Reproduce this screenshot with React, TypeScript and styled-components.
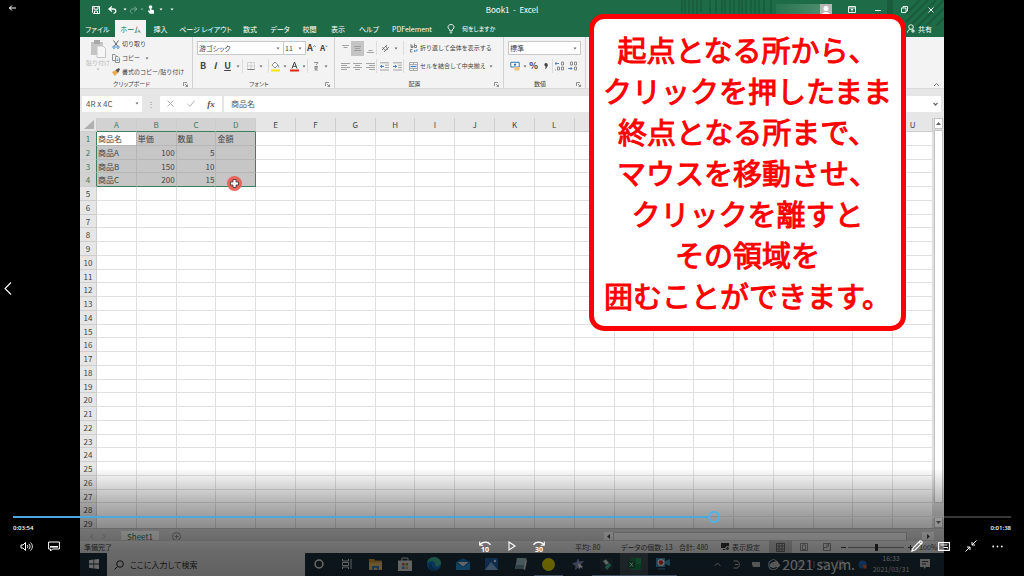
import React, { useState } from "react";
import styled, { createGlobalStyle, css } from "styled-components";

const GlobalStyle = createGlobalStyle`
  * { box-sizing: border-box; }
  body { margin: 0; background: #000; font-family: "Noto Sans CJK JP", "Noto Sans", sans-serif; }
  button, input, select { font: inherit; color: inherit; background: none; border: 0; padding: 0; margin: 0; border-radius: 0; }
  button { cursor: pointer; }
  svg { display: block; flex: none; }
`;

const GREEN = "#1e6c47";

/* ---------- player shell ---------- */

const Player = styled.main`
  position: relative;
  display: grid;
  grid-template-columns: 80px minmax(0, 1fr) 80px;
  grid-template-rows: minmax(0, 1fr);
  height: 100vh;
  overflow: hidden;
  background: #000;
`;

const Gutter = styled.nav`
  display: grid;
  grid-template-rows: 16px 1fr 16px;
  align-items: center;
  justify-items: start;
  padding-left: 3px;
  color: #fff;
`;

const Video = styled.section`
  position: relative;
  display: flex;
  flex-direction: column;
  min-width: 0;
  background: #e6e6e6;
  color: #444;
  font-size: 7px;
  line-height: 10px;
  font-feature-settings: "palt";
`;

const Callout = styled.p`
  position: absolute;
  top: 14px;
  right: 38px;
  margin: 0;
  width: 317px;
  padding: 10px 0;
  border: 5px solid #fe0000;
  border-radius: 15px;
  background: #fff;
  color: #fe0000;
  font-size: 29px;
  line-height: 41px;
  font-weight: 400;
  -webkit-text-stroke: 1px #fe0000;
  text-align: center;
  white-space: nowrap;
  font-feature-settings: normal;
`;

const CalloutLine = styled.span`
  display: block;
`;

/* ---------- title bar and tabs ---------- */

const Header = styled.header`
  position: relative;
  background: ${GREEN};
  color: #fff;
`;

const Stripes = styled.svg`
  position: absolute;
  right: 0;
  top: 0;
`;

const TitleBar = styled.div`
  position: relative;
  display: grid;
  grid-template-columns: 1fr auto 1fr;
  align-items: center;
  height: 19px;
  font-size: 8px;
`;

const QuickAccess = styled.div`
  display: flex;
  align-items: center;
  padding-left: 10px;
`;

const WindowButtons = styled.div`
  display: flex;
  align-items: center;
  justify-content: flex-end;
`;

const Account = styled.span`
  width: 44px;
  height: 11px;
  background: linear-gradient(90deg, #2a7450, #4b8b6b);
`;

const Cell = styled.button<{ $w: number; $dim?: boolean; $on?: boolean }>`
  display: flex;
  align-items: center;
  justify-content: center;
  flex: none;
  width: ${(p) => p.$w}px;
  height: 15px;
  opacity: ${(p) => (p.$dim ? 0.4 : 1)};
  background: ${(p) => (p.$on ? "#c5c5c5" : "none")};
`;

const Tabs = styled.div`
  position: relative;
  display: flex;
  align-items: flex-end;
  height: 18px;
`;

const Tab = styled.button<{ $w: number; $active?: boolean }>`
  flex: none;
  width: ${(p) => p.$w}px;
  height: 17px;
  white-space: nowrap;
  ${(p) => p.$active && css`background: #f3f3f3; color: ${GREEN};`}
`;

const TellMe = styled.button`
  display: flex;
  align-items: center;
  gap: 7px;
  height: 17px;
  padding-left: 8px;
  font-size: 6px;
`;

const Share = styled.button`
  display: flex;
  align-items: center;
  gap: 3px;
  height: 17px;
  margin-left: auto;
  padding-right: 12px;
`;

/* ---------- ribbon ---------- */

const Ribbon = styled.div`
  display: flex;
  height: 52px;
  background: #f3f3f3;
  border-bottom: 1px solid #dcdcdc;
`;

const Group = styled.section<{ $w: number }>`
  display: grid;
  grid-template-rows: 42px 9px;
  flex: none;
  width: ${(p) => p.$w}px;
  border-right: 1px solid #d2d2d2;
`;

const GroupFooter = styled.footer`
  display: grid;
  grid-template-columns: 1fr 9px;
  align-items: center;
  text-align: center;
  font-size: 6px;
`;

const ClipboardBody = styled.div`
  display: grid;
  grid-template-columns: 32px 1fr;
`;

const PasteButton = styled.button`
  display: flex;
  flex-direction: column;
  align-items: center;
  padding: 3px 0 0 4px;
  color: #b8b8b8;
  font-size: 6px;
  font-feature-settings: normal;
  white-space: nowrap;
`;

const CommandList = styled.div`
  display: grid;
  grid-template-rows: repeat(3, 14px);
`;

const Command = styled.button`
  display: flex;
  align-items: center;
  gap: 2px;
  font-size: 6px;
  font-feature-settings: normal;
  white-space: nowrap;
`;

const TwoRows = styled.div`
  display: grid;
  grid-template-rows: 16px 16px;
  gap: 2px;
  padding: 3px 0 0 4px;
`;

const ToolRow = styled.div`
  display: flex;
  align-items: center;
`;

const Divider = styled.span`
  flex: none;
  width: 1px;
  height: 14px;
  background: #dcdcdc;
`;

const Spacer = styled.span`
  flex: none;
  width: 5px;
`;

const SelectBox = styled.label<{ $w: number }>`
  display: flex;
  align-items: center;
  width: ${(p) => p.$w}px;
  height: 14px;
  margin-right: -1px;
  padding: 0 3px 0 1px;
  border: 1px solid #c8c8c8;
  background: #fff;
`;

const Select = styled.select`
  flex: 1;
  min-width: 0;
  appearance: none;
  outline: none;
`;

const FontGlyph = styled.span<{ $italic?: boolean; $line?: boolean; $serif?: boolean; $size?: number }>`
  font-family: ${(p) => (p.$serif ? '"Liberation Serif", serif' : "inherit")};
  font-size: ${(p) => p.$size ?? 9}px;
  font-weight: 700;
  font-style: ${(p) => (p.$italic ? "italic" : "normal")};
  text-decoration: ${(p) => (p.$line ? "underline" : "none")};
`;

const Collapse = styled.button`
  align-self: flex-end;
  margin-left: auto;
  padding: 0 4px 1px 0;
`;

/* ---------- formula bar ---------- */

const FormulaBar = styled.div`
  display: flex;
  align-items: center;
  height: 29px;
  padding: 0 3px 0 2px;
  font-size: 8px;
  font-feature-settings: normal;
  color: #555;
`;

const NameBox = styled.label`
  display: flex;
  align-items: center;
  width: 60px;
  height: 16px;
  padding: 0 3px 0 4px;
  background: #fff;
`;

const BarInput = styled.input`
  flex: 1;
  min-width: 0;
  width: 100%;
  outline: none;
`;

const Grip = styled.span`
  width: 18px;
  text-align: center;
  color: #888;
`;

const FormulaButtons = styled.div`
  display: flex;
  align-items: center;
  width: 62px;
  height: 16px;
  background: #fff;
`;

const FormulaBox = styled.label`
  display: flex;
  align-items: center;
  flex: 1;
  height: 16px;
  margin-left: 2px;
  padding: 0 3px 0 7px;
  background: #fff;
`;

/* ---------- sheet ---------- */

const SheetArea = styled.div`
  position: relative;
  display: grid;
  grid-template-columns: minmax(0, 1fr) 11px;
  grid-template-rows: minmax(0, 1fr);
  flex: 1;
  min-height: 0;
  overflow: hidden;
`;

const Sheet = styled.table`
  display: grid;
  grid-template-columns: 17px repeat(21, minmax(0, 1fr));
  grid-template-rows: 14px repeat(29, minmax(0, 1fr));
  height: 413px;
  font-size: 8px;
  line-height: 13px;
  color: #444;
  font-feature-settings: normal;
`;

const SheetPart = styled.tbody`
  display: contents;
`;
const SheetRow = styled.tr`
  display: contents;
`;

const HeadCell = styled.th<{ $on?: boolean; $side?: boolean }>`
  padding: 0;
  font-weight: 400;
  text-align: center;
  overflow: hidden;
  background: ${(p) => (p.$on ? "#d2d2d2" : "#e6e6e6")};
  color: ${(p) => (p.$on ? "#3c7a5c" : "#444")};
  border-right: 1px solid ${(p) => (p.$side && p.$on ? "#3c8060" : "#cdcdcd")};
  border-bottom: 1px solid ${(p) => (!p.$side && p.$on ? "#3c8060" : "#cdcdcd")};
`;

const Corner = styled.td`
  display: flex;
  align-items: flex-end;
  justify-content: flex-end;
  padding: 0 2px 2px 0;
  border-right: 1px solid #cdcdcd;
  border-bottom: 1px solid #cdcdcd;
`;

const DataCell = styled.td<{ $fill: string; $right: string; $bottom: string; $num: boolean }>`
  padding: 0 1px;
  overflow: hidden;
  white-space: nowrap;
  background: ${(p) => p.$fill};
  border-right: 1px solid ${(p) => p.$right};
  border-bottom: 1px solid ${(p) => p.$bottom};
  text-align: ${(p) => (p.$num ? "right" : "left")};
`;

const Pointer = styled.svg`
  position: absolute;
  left: 147px;
  top: 58px;
`;

const VScroll = styled.div`
  display: grid;
  grid-template-rows: 11px 1fr 11px;
  gap: 1px;
  justify-items: center;
  background: #dedede;
`;

const ScrollPiece = styled.button<{ $short?: boolean }>`
  display: flex;
  align-items: center;
  justify-content: center;
  width: 9px;
  background: #fff;
  border: 1px solid #c4c4c4;
  margin-bottom: ${(p) => (p.$short ? 13 : 0)}px;
`;

const SheetBar = styled.div`
  display: grid;
  grid-template-columns: 1fr 340px;
  flex: none;
  height: 12px;
  background: #d6d6d6;
  border-top: 1px solid #c0c0c0;
`;

const SheetTabs = styled.div`
  display: flex;
  align-items: center;
  padding-left: 6px;
`;

const SheetTab = styled.button`
  width: 38px;
  height: 11px;
  margin: 0 12px 0 6px;
  background: #f6f6f6;
  border-bottom: 1px solid ${GREEN};
  color: ${GREEN};
  font-size: 8px;
  line-height: 9px;
`;

const HScroll = styled.div`
  display: grid;
  grid-template-columns: 9px 1fr 15px 12px 10px;
  align-items: center;
`;

const HThumb = styled.span`
  height: 10px;
  background: #f4f4f4;
  border: 1px solid #bdbdbd;
`;

const HArrow = styled.button`
  display: flex;
  align-items: center;
  justify-content: center;
  height: 10px;
  background: #f4f4f4;
`;

const StatusBar = styled.footer`
  display: flex;
  align-items: center;
  flex: none;
  height: 13px;
  padding-left: 4px;
  background: #ececec;
  border-top: 1px solid #cfcfcf;
`;

const Stat = styled.span<{ $w: number; $push?: boolean }>`
  display: flex;
  align-items: center;
  gap: 2px;
  flex: none;
  width: ${(p) => p.$w}px;
  margin-left: ${(p) => (p.$push ? "auto" : "0")};
  white-space: nowrap;
`;

const Zoom = styled.input`
  appearance: none;
  width: 56px;
  height: 10px;
  &::-webkit-slider-runnable-track { height: 1px; background: #888; }
  &::-webkit-slider-thumb { appearance: none; width: 3px; height: 7px; margin-top: -3px; background: #333; }
`;

/* ---------- taskbar ---------- */

const Taskbar = styled.div`
  position: relative;
  display: flex;
  flex: none;
  height: 23px;
  background: #1d323f;
  color: #fff;
`;

const Search = styled.label`
  display: flex;
  align-items: center;
  gap: 6px;
  width: 198px;
  padding-left: 7px;
  background: #f2f2f2;
  color: #222;
  font-size: 8px;
`;

const SearchInput = styled.input`
  flex: 1;
  min-width: 0;
  outline: none;
  &::placeholder { color: #333; opacity: 1; }
`;

const TaskButton = styled.button<{ $w: number; $open?: boolean; $active?: boolean }>`
  display: flex;
  align-items: center;
  justify-content: center;
  flex: none;
  width: ${(p) => p.$w}px;
  background: ${(p) => (p.$active ? "#46565f" : "none")};
  border-bottom: 1px solid ${(p) => (p.$open ? "#9cc4ee" : "transparent")};
`;

const Tray = styled.div`
  display: flex;
  margin-left: auto;
  padding-right: 8px;
`;

const Clock = styled.time`
  display: grid;
  grid-template-rows: 11px 11px;
  width: 46px;
  text-align: center;
  color: #d8d8d8;
`;

const Watermark = styled.span`
  position: absolute;
  right: 89px;
  top: 1px;
  font-size: 14px;
  line-height: 20px;
  white-space: nowrap;
  color: #f0f0f0;
  font-feature-settings: normal;
`;

/* ---------- playback controls ---------- */

const Controls = styled.div`
  position: absolute;
  left: 0;
  right: 0;
  bottom: 0;
  display: flex;
  flex-direction: column;
  justify-content: flex-end;
  height: 108px;
  padding: 0 13px 18px;
  background: linear-gradient(
    rgba(0, 0, 0, 0),
    rgba(0, 0, 0, 0.28) 30%,
    rgba(0, 0, 0, 0.44) 53%,
    rgba(0, 0, 0, 0.57) 80%,
    rgba(0, 0, 0, 0.6)
  );
  color: #fff;
`;

const Seek = styled.input`
  appearance: none;
  width: 100%;
  height: 12px;
  outline: none;
  &::-webkit-slider-runnable-track {
    height: 2px;
    background: linear-gradient(90deg, #4aa8dd 0 69.8%, transparent 69.8% 70.9%, rgba(160, 160, 160, 0.35) 70.9%);
  }
  &::-webkit-slider-thumb {
    appearance: none;
    width: 12px;
    height: 12px;
    margin-top: -5px;
    border: 2px solid #4fb3ea;
    border-radius: 50%;
  }
`;

const Times = styled.div`
  display: flex;
  justify-content: space-between;
  font-family: "Open Sans", sans-serif;
  font-size: 6px;
  line-height: 11px;
  font-weight: 600;
`;

const ButtonRow = styled.div`
  display: grid;
  grid-template-columns: 1fr auto 1fr;
  height: 24px;
`;

const Cluster = styled.div<{ $end?: boolean }>`
  display: flex;
  justify-content: ${(p) => (p.$end ? "flex-end" : "flex-start")};
`;

const PlayerButton = styled.button`
  display: flex;
  align-items: center;
  justify-content: center;
  width: 27px;
  height: 24px;
  color: #fff;
`;

/* ---------- drawings ---------- */

type GlyphProps = { w?: number; h?: number; box?: string; sw?: number; color?: string; children: React.ReactNode };
const Glyph = ({ w = 10, h = w, box = `0 0 ${w} ${h}`, sw = 1, color = "currentColor", children }: GlyphProps) => (
  <svg width={w} height={h} viewBox={box} fill="none" stroke={color} strokeWidth={sw} aria-hidden="true">
    {children}
  </svg>
);

const Caret = ({ color = "#666" }: { color?: string }) => (
  <Glyph w={4} h={3} color="none"><path d="M0.5 0.5h3L2 2.5z" fill={color} /></Glyph>
);

const Launcher = () => (
  <Glyph w={5} sw={0.8} color="#777"><path d="M0.5 4V0.5H4M2 2l2.5 2.5M4.5 2.5v2h-2" /></Glyph>
);

const Lines = ({ d }: { d: string }) => (
  <Glyph w={9} sw={0.9} color="#9a9a9a"><path d={d} /></Glyph>
);

const Skip = ({ n, flip }: { n: number; flip?: boolean }) => (
  <svg width="14" height="14" viewBox="0 0 14 14" fill="none" stroke="currentColor" strokeWidth="1.1" aria-hidden="true">
    <path d={flip ? "M1.5 6C3.5 2.3 9.5 2 12 6M12.3 2.5V6.2H8.8" : "M12.5 6C10.5 2.3 4.5 2 2 6M1.7 2.5V6.2H5.2"} />
    <text x="7" y="13" textAnchor="middle" fontSize="7" fontWeight="700" fontFamily="Open Sans" fill="currentColor" stroke="none">{n}</text>
  </svg>
);

/* ---------- data ---------- */

const TABS: [string, number][] = [
  ["ファイル", 35], ["ホーム", 31], ["挿入", 29], ["ページ レイアウト", 61], ["数式", 28],
  ["データ", 32], ["校閲", 27], ["表示", 30], ["ヘルプ", 32], ["PDFelement", 54],
];

const COLUMNS = ["A", "B", "C", "D", "E", "F", "G", "H", "I", "J", "K", "L", "", "", "", "", "", "", "", "", "U"];
const ROWS = Array.from({ length: 29 }, (_, i) => i + 1);
const DATA: string[][] = [
  ["商品名", "単価", "数量", "金額"],
  ["商品A", "100", "5", ""],
  ["商品B", "150", "10", ""],
  ["商品C", "200", "15", ""],
];

const MESSAGE = [
  "起点となる所から、", "クリックを押したまま", "終点となる所まで、", "マウスを移動させ、",
  "クリックを離すと", "その領域を", "囲むことができます。",
];

const LEFT = "M0 1.5H9M0 3.5H6M0 5.5H9M0 7.5H6";
const CENTER = "M0 1.5H9M2 3.5H7M0 5.5H9M2 7.5H7";
const RIGHT = "M0 1.5H9M3 3.5H9M0 5.5H9M3 7.5H9";

/* ---------- sections ---------- */

const ExcelHeader = () => (
  <Header>
    <Stripes width="264" height="37" viewBox="0 0 264 37" aria-hidden="true">
      <g stroke="#195b3c" strokeWidth="1.5">
        <path d="M2 0V15M5 0V15M9 0V15M13 0V15M17 0V15M21 0V12M30 0V15M36 0V15M42 0V15M45 0V15M50 0V15M54 0V15M59 0V15M62 0V15M66 0V15M71 0V15M75 0V15M79 0V15M84 0V15M91 0V15" />
        <path strokeWidth="6" d="M210 0V15" />
        <path strokeWidth="2" d="M226 14L240 0M226 22L248 0M228 28L256 0M236 28L264 0M246 26L264 8M256 26L264 18" />
      </g>
    </Stripes>
    <TitleBar>
      <QuickAccess>
        <Cell $w={12} aria-label="上書き保存">
          <Glyph w={8}><path d="M.5.5H7.5V7.5H1.5L.5 6.5ZM2 .5V3.2H6V.5M2.5 7.5V5H5.5V7.5" /></Glyph>
        </Cell>
        <Cell $w={20} aria-label="元に戻す">
          <Glyph w={9} h={8} sw={1.3}><path d="M3.8.6L1 3L3.8 5.5M1 3H5.5C8.5 3 8.500 7 5.5 7.3" /></Glyph>
        </Cell>
        <Cell $w={5} aria-label="元に戻す一覧"><Caret color="#fff" /></Cell>
        <Cell $w={12} $dim aria-label="やり直し">
          <Glyph w={9} h={8}><path d="M5.2.6L8 3L5.2 5.5M8 3H3.5C.5 3 .5 7 3.5 7.3" /></Glyph>
        </Cell>
        <Cell $w={5} $dim aria-label="やり直し一覧"><Caret color="#fff" /></Cell>
        <Cell $w={14} aria-label="タッチ/マウス モード">
          <Glyph w={8} h={9} color="none"><circle cx="3.5" cy="2" r="1.8" fill="#fff" /><path d="M2.8 2H4.3V4.5L7 5.2V8.8H2.8L.8 6L1.6 5.3L2.8 6Z" fill="#fff" /></Glyph>
        </Cell>
        <Cell $w={5} aria-label="モード一覧"><Caret color="#fff" /></Cell>
        <Cell $w={18} aria-label="ツール バーのカスタマイズ"><Caret color="#fff" /></Cell>
      </QuickAccess>
      <span>Book1&nbsp; -&nbsp; Excel</span>
      <WindowButtons>
        <Account />
        <Cell $w={12} aria-label="アカウント">
          <Glyph w={12} color="none"><path d="M0 0H12V12H0Z" fill="#b5b8b6" /><circle cx="6" cy="4.5" r="2.5" fill="#fff" /><path d="M1.5 12C1.5 6.5 10.5 6.5 10.5 12Z" fill="#fff" /></Glyph>
        </Cell>
        <Cell $w={39} aria-label="リボンの表示オプション">
          <Glyph w={8} h={7} sw={0.9}><path d="M.5.5H7.5V6.5H.5ZM.5 2H7.5M4 5.5V3M2.8 4L4 3L5.2 4" /></Glyph>
        </Cell>
        <Cell $w={14} aria-label="最小化"><Glyph w={6}><path d="M0 3.5H6" /></Glyph></Cell>
        <Cell $w={38} aria-label="元に戻す (縮小)"><Glyph w={7} sw={0.9}><path d="M.5 2H5V6.5H.5ZM2 2V.5H6.5V5H5" /></Glyph></Cell>
        <Cell $w={16} aria-label="閉じる"><Glyph w={6} sw={0.9}><path d="M.5.5L5.5 5.5M5.5.5L.5 5.5" /></Glyph></Cell>
        <Spacer />
      </WindowButtons>
    </TitleBar>
    <Tabs>
      {TABS.map(([label, w]) => (
        <Tab key={label} $w={w} $active={label === "ホーム"}>{label}</Tab>
      ))}
      <TellMe>
        <Glyph w={8} h={10} sw={0.9}><path d="M2.8 7V5.8C-.5 3.5 1.3.5 4 .5S8.5 3.5 5.2 5.8V7ZM2.8 8.8H5.2" /></Glyph>
        何をしますか
      </TellMe>
      <Share>
        <Glyph w={8} h={9} sw={0.9}><circle cx="4" cy="3" r="2.3" /><path d="M.5 8.5C.5 6.5 2 5.5 3.5 5.4M5 5.4L6 6.5M6 5V9M4 7H8" /></Glyph>
        共有
      </Share>
    </Tabs>
  </Header>
);

const ClipboardGroup = () => (
  <Group $w={113}>
    <ClipboardBody>
      <PasteButton>
        <Glyph w={16} h={18} color="none">
          <path d="M1 2H13V15H1Z" fill="#c4c4c4" /><path d="M4 0H10V4H4Z" fill="#a9a9a9" /><path d="M7 6H13L15.5 8.5V17.5H7Z" fill="#f6f6f6" stroke="#c6c6c6" />
        </Glyph>
        貼り付け
        <Caret color="#bbb" />
      </PasteButton>
      <CommandList>
        <Command>
          <Glyph w={8} h={9} sw={0.9} color="#555"><path d="M1.5.5L5.5 6M6.5.5L2.5 6" /><g stroke="#3d84c4"><circle cx="2" cy="7.2" r="1.2" /><circle cx="6" cy="7.2" r="1.2" /></g></Glyph>
          切り取り
        </Command>
        <Command>
          <Glyph w={8} h={9} sw={0.8} color="#777"><path d="M.5.5H3L4.5 2V6.5H.5Z" /><path d="M3.5 2.5H6L7.5 4V8.5H3.5Z" fill="#fff" /><path d="M4.5 5H6.5M4.5 6.5H6.5" stroke="#3d84c4" /></Glyph>
          コピー&nbsp;&nbsp; <Caret />
        </Command>
        <Command>
          <Glyph w={8} h={8} color="none"><path d="M0 4L3.5 2L6 5L2.5 8Z" fill="#eda94e" /><path d="M3.5 2L6.8 0L8 1.2L6 5Z" fill="#555" /></Glyph>
          書式のコピー/貼り付け
        </Command>
      </CommandList>
    </ClipboardBody>
    <GroupFooter><span>クリップボード</span><Launcher /></GroupFooter>
  </Group>
);

const FontGroup = () => (
  <Group $w={142}>
    <TwoRows>
      <ToolRow>
        <SelectBox $w={87}><Select aria-label="フォント"><option>游ゴシック</option></Select><Caret /></SelectBox>
        <SelectBox $w={23}><Select aria-label="フォント サイズ"><option>11</option></Select><Caret /></SelectBox>
        <Cell $w={13} aria-label="拡大"><FontGlyph $size={9}>A</FontGlyph><Glyph w={3} h={7} sw={0.8} color="#2b6cb0"><path d="M.3 1.8L1.5.6L2.7 1.8" /></Glyph></Cell>
        <Cell $w={12} aria-label="縮小"><FontGlyph $size={8}>A</FontGlyph><Glyph w={3} h={7} sw={0.8} color="#2b6cb0"><path d="M.3.6L1.5 1.8L2.7.6" /></Glyph></Cell>
      </ToolRow>
      <ToolRow>
        <Cell $w={12}><FontGlyph>B</FontGlyph></Cell>
        <Cell $w={12}><FontGlyph $italic>I</FontGlyph></Cell>
        <Cell $w={13}><FontGlyph $line>U</FontGlyph></Cell>
        <Cell $w={8} aria-label="下線の種類"><Caret /></Cell>
        <Divider />
        <Cell $w={15} aria-label="罫線"><Glyph w={8} sw={0.8} color="#aaa"><path d="M.5.5H7.5V7.5H.5ZM4 .5V7.5M.5 4H7.5" strokeDasharray="1 1" /><path d="M.5 7.5H7.5" stroke="#666" /></Glyph></Cell>
        <Cell $w={5} aria-label="罫線の種類"><Caret /></Cell>
        <Spacer />
        <Divider />
        <Cell $w={12} aria-label="塗りつぶしの色"><Glyph w={10} h={11} sw={0.8} color="#777"><path d="M2 4L5 1L8 4L5 7Z" fill="#fff" /><path d="M8 4L9 6.5" stroke="#3d84c4" /><path d="M1 9.5H10" strokeWidth="2" stroke="#f7e600" /></Glyph></Cell>
        <Cell $w={7} aria-label="塗りつぶしの一覧"><Caret /></Cell>
        <Cell $w={12} aria-label="フォントの色"><Glyph w={9} h={11}><path d="M2 7.5L4.5 1L7 7.5M3 5.3H6" /><path d="M0 9.5H9" strokeWidth="2" stroke="#ee2211" /></Glyph></Cell>
        <Cell $w={7} aria-label="フォントの色の一覧"><Caret /></Cell>
        <Divider />
        <Cell $w={15} aria-label="ふりがな"><Glyph w={6} h={10} sw={0.8} color="#777"><path d="M1 1.5H5L3 4M1.5 5.5H5M3 5V9M1 7H5M1.5 9H5" /></Glyph></Cell>
        <Cell $w={5} aria-label="ふりがなの一覧"><Caret /></Cell>
      </ToolRow>
    </TwoRows>
    <GroupFooter><span>フォント</span><Launcher /></GroupFooter>
  </Group>
);

const AlignGroup = () => (
  <Group $w={169}>
    <TwoRows>
      <ToolRow>
        <Cell $w={12} aria-label="上揃え"><Lines d="M1 1.5H8M2.5 3.5H6.5" /></Cell>
        <Cell $w={13} $on aria-label="上下中央揃え"><Lines d="M1 2.5H8M2 4.5H7M1 6.5H8" /></Cell>
        <Cell $w={12} aria-label="下揃え"><Lines d="M2.5 6.5H6.5M1 8.5H8" /></Cell>
        <Divider />
        <Cell $w={16} aria-label="方向"><Glyph w={9} sw={0.9} color="#777"><path d="M1 6L6 1M3 8L8 3M1.5 3L4 6.5M5 2L6.5 5.5L4.5 6" /></Glyph></Cell>
        <Cell $w={5} aria-label="方向の一覧"><Caret /></Cell>
        <Spacer />
        <Divider />
        <Spacer />
        <Command>
          <Glyph w={9} h={10} sw={0.8} color="#666"><path d="M2 1V4.5H4V3H2M5.5.5V4.5H7.5V2.5H5.5M3.5 6.5H1.5V9H3.5" /><path d="M8 6V8H5M6 7L5 8L6 9" stroke="#3d84c4" /></Glyph>
          折り返して全体を表示する
        </Command>
      </ToolRow>
      <ToolRow>
        <Cell $w={12} aria-label="左揃え"><Lines d={LEFT} /></Cell>
        <Cell $w={13} aria-label="中央揃え"><Lines d={CENTER} /></Cell>
        <Cell $w={12} aria-label="右揃え"><Lines d={RIGHT} /></Cell>
        <Divider />
        <Cell $w={14} aria-label="インデントを減らす"><Glyph w={9} sw={0.9} color="#9a9a9a"><path d="M0 .8H9M5 3.2H9M5 5.6H9M0 8H9" /><path d="M4 4.4H.5M2 3L.5 4.4L2 5.8" stroke="#2b6cb0" /></Glyph></Cell>
        <Cell $w={12} aria-label="インデントを増やす"><Glyph w={9} sw={0.9} color="#9a9a9a"><path d="M0 .8H9M5 3.2H9M5 5.6H9M0 8H9" /><path d="M0 4.4H3.5M2 3L3.5 4.4L2 5.8" stroke="#2b6cb0" /></Glyph></Cell>
        <Divider />
        <Spacer />
        <Command>
          <Glyph w={9} sw={0.8} color="#999"><path d="M.5.5H8.5V8.5H.5ZM.5 2.5H8.5M.5 6.5H8.5M4.5 .5V2.5M4.5 6.5V8.5" /><path d="M1.5 4.5H7.5" stroke="#3d84c4" strokeWidth="1.2" /></Glyph>
          セルを結合して中央揃え&nbsp; <Caret />
        </Command>
      </ToolRow>
    </TwoRows>
    <GroupFooter><span>配置</span><Launcher /></GroupFooter>
  </Group>
);

const NumberGroup = () => (
  <Group $w={82}>
    <TwoRows>
      <ToolRow>
        <SelectBox $w={73}><Select aria-label="表示形式"><option>標準</option></Select><Caret /></SelectBox>
      </ToolRow>
      <ToolRow>
        <Cell $w={14} aria-label="通貨"><Glyph w={10} color="none"><path d="M.8 1.3H9.2V6H.8Z" stroke="#2f76b5" fill="#fff" /><circle cx="5" cy="3.6" r="1.2" fill="#2f76b5" /><path d="M4.5 6H9.5V9.5H4.5Z" fill="#efc27a" /></Glyph></Cell>
        <Cell $w={5} aria-label="通貨の一覧"><Caret /></Cell>
        <Cell $w={13}><FontGlyph>%</FontGlyph></Cell>
        <Cell $w={12} aria-label="桁区切り"><Glyph w={4} h={6} color="none"><path d="M2 0C4.5 0 4.5 4 1 6L1 5C2 4.5 2 3.8 1.5 3.5C0 3 0 0 2 0Z" fill="#444" /></Glyph></Cell>
        <Divider />
        <Cell $w={14} aria-label="小数点以下を増やす"><Glyph w={10} sw={0.8} color="#777"><path d="M0 2.5H4M1.5 1L0 2.5L1.5 4" stroke="#2b6cb0" /><path d="M6.5 1H8.5V4H6.5ZM2.5 6H4.5V9H2.5ZM6.5 6H8.5V9H6.5ZM.5 8.5V9.5" /></Glyph></Cell>
        <Cell $w={12} aria-label="小数点以下を減らす"><Glyph w={10} sw={0.8} color="#777"><path d="M0 7.5H4M2.5 6L4 7.5L2.5 9" stroke="#2b6cb0" /><path d="M6.5 6H8.5V9H6.5ZM2.5 1H4.5V4H2.5ZM6.5 1H8.5V4H6.5Z" /></Glyph></Cell>
      </ToolRow>
    </TwoRows>
    <GroupFooter><span>数値</span><Launcher /></GroupFooter>
  </Group>
);

const SheetTable = () => {
  const cell = (r: number, c: number) => {
    const selected = r < 4 && c < 4;
    const fill = !selected ? "#fff" : r === 0 && c === 0 ? "#fff" : "#c6c6c6";
    const line = selected ? "#b6b6b6" : "#e0e0e0";
    const text = DATA[r]?.[c] ?? "";
    return (
      <DataCell
        key={c}
        $fill={fill}
        $right={selected && c === 3 ? "#3c8060" : line}
        $bottom={selected && r === 3 ? "#3c8060" : line}
        $num={r > 0 && c > 0}
      >
        {text}
      </DataCell>
    );
  };
  return (
    <Sheet>
      <SheetPart as="thead">
        <SheetRow>
          <Corner><Glyph w={10} h={9} color="none"><path d="M10 0V9H0Z" fill="#b0b0b0" /></Glyph></Corner>
          {COLUMNS.map((c, i) => <HeadCell key={i} scope="col" $on={i < 4}>{c}</HeadCell>)}
        </SheetRow>
      </SheetPart>
      <SheetPart>
        {ROWS.map((n) => (
          <SheetRow key={n}>
            <HeadCell scope="row" $side $on={n < 5}>{n}</HeadCell>
            {COLUMNS.map((_, c) => cell(n - 1, c))}
          </SheetRow>
        ))}
      </SheetPart>
    </Sheet>
  );
};

const TaskbarRow = () => (
  <Taskbar>
    <TaskButton $w={27} aria-label="スタート">
      <Glyph w={10} color="none"><path d="M0 1.2L4.5.6V4.6H0ZM5.2.5L10 0V4.6H5.2ZM0 5.4H4.5V9.4L0 8.8ZM5.2 5.4H10V10L5.2 9.5Z" fill="#fff" /></Glyph>
    </TaskButton>
    <Search>
      <Glyph w={10}><circle cx="6" cy="4" r="3.3" /><path d="M3.5 6.5L.5 9.5" /></Glyph>
      <SearchInput placeholder="ここに入力して検索" aria-label="検索" />
    </Search>
    <TaskButton $w={28} aria-label="Cortana"><Glyph w={10} sw={1.5}><circle cx="5" cy="5" r="3.9" /></Glyph></TaskButton>
    <TaskButton $w={28} aria-label="タスク ビュー"><Glyph w={10} sw={0.9}><path d="M.5 0V2H6.5V0M.5 3.5H6.5V6.5H.5ZM.5 10V8H6.5V10M9 0V10" /></Glyph></TaskButton>
    <TaskButton $w={29} aria-label="エクスプローラー"><Glyph w={13} h={11} color="none"><path d="M0 0H5L6 1.5H13V11H0Z" fill="#e0a63a" /><path d="M0 3.5H13V11H0Z" fill="#f8d070" /><path d="M3 7H10V11H8V9H5V11H3Z" fill="#3c8fd0" /></Glyph></TaskButton>
    <TaskButton $w={29} aria-label="ストア"><Glyph w={14} color="none"><path d="M4 4V1H10V4" stroke="#ddd" /><path d="M0 3.5H14V14H0Z" fill="#eee" /><path d="M4 6H6.5V8.5H4Z" fill="#e55" /><path d="M7.5 6H10V8.5H7.5Z" fill="#7a3" /><path d="M4 9.5H6.5V12H4Z" fill="#39d" /><path d="M7.5 9.5H10V12H7.5Z" fill="#eb3" /></Glyph></TaskButton>
    <TaskButton $w={29} aria-label="Edge"><Glyph w={14} color="none"><circle cx="7" cy="7" r="7" fill="#1a80d0" /><path d="M0 6C1-1 13-2 14 6C14 9 10 10 8 8.5C9 6 7 4 4.5 4C2 4 .5 5.5 0 6Z" fill="#42c8a4" /><path d="M4.5 6.5C4 11 8 13 12 11.5C9 15 3 14 2 10C1.8 8 3 6.8 4.5 6.5Z" fill="#0f5ca0" /></Glyph></TaskButton>
    <TaskButton $w={29} aria-label="メール"><Glyph w={14} h={12} color="none"><path d="M0 4L7 0L14 4V12H0Z" fill="#1a76c0" /><path d="M1.5 4H12.5L7 8.5Z" fill="#f2f2f2" /><path d="M0 5L7 9.5L14 5V12H0Z" fill="#2aa0e8" /></Glyph></TaskButton>
    <TaskButton $w={29} aria-label="フォト"><Glyph w={13} h={12} color="none"><path d="M0 0H13V12H0Z" fill="#2468b4" /><path d="M0 12L6 4L13 12Z" fill="#8fc4f4" /><circle cx="10" cy="3" r="1.2" fill="#fff" /></Glyph></TaskButton>
    <TaskButton $w={28} aria-label="メモ帳"><Glyph w={13} h={12} color="none"><path d="M3 0H12L10 11H1Z" fill="#a8cfd8" /><path d="M9 11L12 0L13 3L11 12Z" fill="#e8e8e8" /><path d="M1 11L2 7H10L9.5 11Z" fill="#6f9da8" /></Glyph></TaskButton>
    <TaskButton $w={29} $open aria-label="レコーダー"><Glyph w={13} color="none"><circle cx="6.5" cy="6.5" r="6.5" fill="#f2ea00" /></Glyph></TaskButton>
    <TaskButton $w={29} aria-label="ユーティリティ"><Glyph w={12} color="none"><path d="M6 0L7.5 3.5L12 3L9 6.5L11 11L7 9L3 12L3.5 8L0 5.5L4.5 4Z" fill="#8c9ccc" /><path d="M6 5L11 9L8 9.5L7 12Z" fill="#fff" /></Glyph></TaskButton>
    <TaskButton $w={28} $open aria-label="動画編集"><Glyph w={13} color="none"><path d="M0 0H13V13H0Z" fill="#2c3c46" /><path d="M3 3L6 1.5L9 5L6 7Z" fill="#d8f4ec" /><path d="M5 9L9 5L11.5 7L7 12Z" fill="#45c8a8" /></Glyph></TaskButton>
    <TaskButton $w={28} $open $active aria-label="Excel"><Glyph w={13} h={12} color="none"><path d="M3 0H13V12H3Z" fill="#1c8a50" /><path d="M8 0H13V6H8Z" fill="#2ca868" /><path d="M0 3H7V10H0Z" fill="#0f6a3c" /><path d="M2 4.5L5 8.5M5 4.5L2 8.5" stroke="#fff" /></Glyph></TaskButton>
    <TaskButton $w={29} $open aria-label="画面録画"><Glyph w={14} h={12} color="none"><path d="M0 0H9V9H0Z" fill="#48a0c8" /><path d="M9 3L14 1V8L9 6Z" fill="#48a0c8" /><circle cx="5" cy="4.5" r="3.5" fill="#fff" /><circle cx="5" cy="4.5" r="2.2" fill="#e83030" /><path d="M2 11H9" stroke="#48a0c8" /></Glyph></TaskButton>
    <Tray>
      <TaskButton $w={20} aria-label="隠れているインジケーター"><Glyph w={7} h={5} color="#ccc"><path d="M.5 4L3.5 1L6.5 4" /></Glyph></TaskButton>
      <TaskButton $w={19} aria-label="電源"><Glyph w={7} h={9} color="#ccc"><path d="M.5 1H4C7 1 7 8 4 8H.5M2 4.5H5" /></Glyph></TaskButton>
      <TaskButton $w={18} aria-label="バッテリー"><Glyph w={9} h={6} color="none"><path d="M1 1H9V6H2L1 3Z" fill="#ccc" /></Glyph></TaskButton>
      <TaskButton $w={21} aria-label="OneDrive"><Glyph w={11} h={6} color="none"><path d="M1 6C-1 3 3 2 4 2.5C5-1 9 0 9.5 2.5C12 3 11 6 10 6Z" fill="#ccc" /></Glyph></TaskButton>
      <TaskButton $w={71} aria-label="音量と IME"><Glyph w={50} h={9} color="#888"><path d="M1 3H3L6 1V8L3 6H1ZM18 1V8M24 2H31V7H24ZM41 1H47V8H41ZM44 1V8" /></Glyph></TaskButton>
      <TaskButton $w={12} aria-label="通知アプリ"><Glyph w={9} color="none"><circle cx="4.5" cy="4.5" r="4" fill="#2a70c8" /><path d="M5 5H8.5V8.5H6Z" fill="#e87040" /></Glyph></TaskButton>
      <Clock><span>16:33</span><span>2021/03/31</span></Clock>
      <TaskButton $w={22} aria-label="通知"><Glyph w={10} color="none"><path d="M0 0H10V8H6L4 10V8H0Z" fill="#ddd" /><path d="M2 2.5H8M2 5H6" stroke="#445" /></Glyph></TaskButton>
    </Tray>
    <Watermark>© 2021 saym.</Watermark>
  </Taskbar>
);

const PlaybackControls = () => {
  const [position, setPosition] = useState(234);
  return (
    <Controls>
      <Seek type="range" min={0} max={332} value={position} onChange={(e) => setPosition(Number(e.target.value))} aria-label="再生位置" />
      <Times><span>0:03:54</span><span>0:01:38</span></Times>
      <ButtonRow>
        <Cluster>
          <PlayerButton aria-label="音量"><Glyph w={13} h={11}><path d="M1 4H3L5.5 1.5V9.5L3 7H1ZM7 4C8 5 8 6 7 7M8.8 2.8C10.5 4.5 10.5 6.5 8.8 8.2M10.5 1.5C13 4 13 7 10.5 9.5" /></Glyph></PlayerButton>
          <PlayerButton aria-label="字幕"><Glyph w={12} h={11}><path d="M.6 1H11.4V8H4.5L2.5 10V8H.6Z" /><path d="M2 5.8H10" strokeWidth="1.6" /></Glyph></PlayerButton>
        </Cluster>
        <Cluster>
          <PlayerButton aria-label="10 秒戻る"><Skip n={10} /></PlayerButton>
          <PlayerButton aria-label="再生"><Glyph w={8} h={10} sw={1.1}><path d="M1 1L7 5L1 9Z" /></Glyph></PlayerButton>
          <PlayerButton aria-label="30 秒進む"><Skip n={30} flip /></PlayerButton>
        </Cluster>
        <Cluster $end>
          <PlayerButton aria-label="編集"><Glyph w={12} sw={1.2}><path d="M1 11L2 8L9 1C10 .3 11.7 2 11 3L4 10ZM8 2L10 4" /></Glyph></PlayerButton>
          <PlayerButton aria-label="ミニ ビュー"><Glyph w={12} h={9} sw={1.1}><path d="M.6.6H11.4V8.4H.6ZM2.5 3H9.5M5.5 5.5H9.5V6.5" /></Glyph></PlayerButton>
          <PlayerButton aria-label="全画面表示の終了"><Glyph w={12}><path d="M11.5.5L7 5M7 2V5H10M.5 11.5L5 7M2 7H5V10" /></Glyph></PlayerButton>
          <PlayerButton aria-label="その他"><Glyph w={11} h={3} color="none"><g fill="#fff"><circle cx="1.2" cy="1.5" r="0.9" /><circle cx="5.5" cy="1.5" r="0.9" /><circle cx="9.8" cy="1.5" r="0.9" /></g></Glyph></PlayerButton>
        </Cluster>
      </ButtonRow>
    </Controls>
  );
};

export default function App() {
  return (
    <Player>
      <GlobalStyle />
      <Gutter>
        <Cell $w={18} aria-label="戻る"><Glyph w={7} h={6}><path d="M0 3H7M3 .5L.5 3L3 5.5" /></Glyph></Cell>
        <Cell $w={10} aria-label="前へ"><Glyph w={8} h={13} sw={1.1}><path d="M7 .5L1 6.5L7 12.5" /></Glyph></Cell>
      </Gutter>
      <Video>
        <ExcelHeader />
        <Ribbon>
          <ClipboardGroup />
          <FontGroup />
          <AlignGroup />
          <NumberGroup />
          <Collapse aria-label="リボンを折りたたむ"><Glyph w={7} h={5} color="#777"><path d="M1 4L3.5 1.5L6 4" /></Glyph></Collapse>
        </Ribbon>
        <FormulaBar>
          <NameBox><BarInput defaultValue="4R x 4C" aria-label="名前ボックス" /><Caret /></NameBox>
          <Grip>⋮</Grip>
          <FormulaButtons>
            <Cell $w={20} aria-label="キャンセル"><Glyph w={7} color="#b0b0b0"><path d="M.5.5L6.5 6.5M6.5.5L.5 6.5" /></Glyph></Cell>
            <Cell $w={21} aria-label="入力"><Glyph w={8} h={7} color="#b0b0b0"><path d="M.5 4L3 6.3L7.5.7" /></Glyph></Cell>
            <Cell $w={20}><FontGlyph $italic $serif>fx</FontGlyph></Cell>
          </FormulaButtons>
          <FormulaBox><BarInput defaultValue="商品名" aria-label="数式バー" /><Glyph w={5} h={4} sw={1.2} color="#666"><path d="M.5.8L2.5 3L4.5.8" /></Glyph></FormulaBox>
        </FormulaBar>
        <SheetArea>
          <SheetTable />
          <VScroll>
            <ScrollPiece aria-label="上へ"><Glyph w={5} h={3} color="none"><path d="M0 3H5L2.5 0Z" fill="#666" /></Glyph></ScrollPiece>
            <ScrollPiece $short aria-label="縦スクロール" />
            <ScrollPiece aria-label="下へ"><Glyph w={5} h={3} color="none"><path d="M0 0H5L2.5 3Z" fill="#666" /></Glyph></ScrollPiece>
          </VScroll>
          <Pointer width="15" height="15" viewBox="0 0 15 15" aria-hidden="true">
            <circle cx="7.5" cy="7.5" r="7.5" fill="#ec5a50" opacity="0.9" />
            <path d="M6 3.5H9V6H11.5V9H9V11.5H6V9H3.5V6H6Z" fill="#fff" stroke="#333" strokeWidth="0.8" />
          </Pointer>
        </SheetArea>
        <SheetBar>
          <SheetTabs>
            <Cell $w={12} $dim aria-label="前のシート"><Glyph w={4} h={5}><path d="M3 .5L1 2.5L3 4.5" /></Glyph></Cell>
            <Cell $w={12} $dim aria-label="次のシート"><Glyph w={4} h={5}><path d="M1 .5L3 2.5L1 4.5" /></Glyph></Cell>
            <Spacer />
            <SheetTab>Sheet1</SheetTab>
            <Cell $w={10} aria-label="新しいシート"><Glyph w={9} sw={0.8} color="#777"><circle cx="4.5" cy="4.5" r="4" /><path d="M4.5 2.5V6.5M2.5 4.5H6.5" /></Glyph></Cell>
          </SheetTabs>
          <HScroll>
            <HArrow aria-label="左へ"><Glyph w={3} h={5} color="none"><path d="M3 0V5L0 2.5Z" fill="#444" /></Glyph></HArrow>
            <HThumb />
            <span />
            <HArrow aria-label="右へ"><Glyph w={3} h={5} color="none"><path d="M0 0V5L3 2.5Z" fill="#444" /></Glyph></HArrow>
          </HScroll>
        </SheetBar>
        <StatusBar>
          <span>準備完了</span>
          <Stat $w={46} $push>平均: 80</Stat>
          <Stat $w={58}>データの個数: 13</Stat>
          <Stat $w={42}>合計: 480</Stat>
          <Stat $w={48}><Glyph w={9} h={8} color="none"><path d="M0 0H8V5H0Z" fill="#333" /><path d="M2 6.5H5" stroke="#333" /><circle cx="6.5" cy="5.5" r="2" fill="#555" stroke="#f0f0f0" /></Glyph>表示設定</Stat>
          <Cell $w={23} $on aria-label="標準"><Glyph w={9} sw={0.8} color="#555"><path d="M.5.5H8.5V8.5H.5ZM.5 3H8.5M.5 6H8.5M3 .5V8.5M6 .5V8.5" /></Glyph></Cell>
          <Cell $w={23} aria-label="ページ レイアウト表示"><Glyph w={8} sw={0.8} color="#777"><path d="M.5.5H7.5V7.5H.5ZM2.5 2H5.5V6.5H2.5Z" /></Glyph></Cell>
          <Cell $w={23} aria-label="改ページ プレビュー"><Glyph w={8} sw={0.8} color="#777"><path d="M.5.5H7.5V7.5H.5ZM.5 4.5H4V.5M5.5.5V4" /></Glyph></Cell>
          <Cell $w={10} aria-label="縮小"><Glyph w={5}><path d="M0 2.5H5" /></Glyph></Cell>
          <Zoom type="range" aria-label="ズーム" defaultValue={50} />
          <Cell $w={12} aria-label="拡大"><Glyph w={5}><path d="M0 2.5H5M2.5 0V5" /></Glyph></Cell>
          <Stat $w={28}>&nbsp;&nbsp;100%</Stat>
        </StatusBar>
        <TaskbarRow />
        <Callout>
          {MESSAGE.map((line) => <CalloutLine key={line}>{line}</CalloutLine>)}
        </Callout>
      </Video>
      <Gutter as="div" />
      <PlaybackControls />
    </Player>
  );
}
